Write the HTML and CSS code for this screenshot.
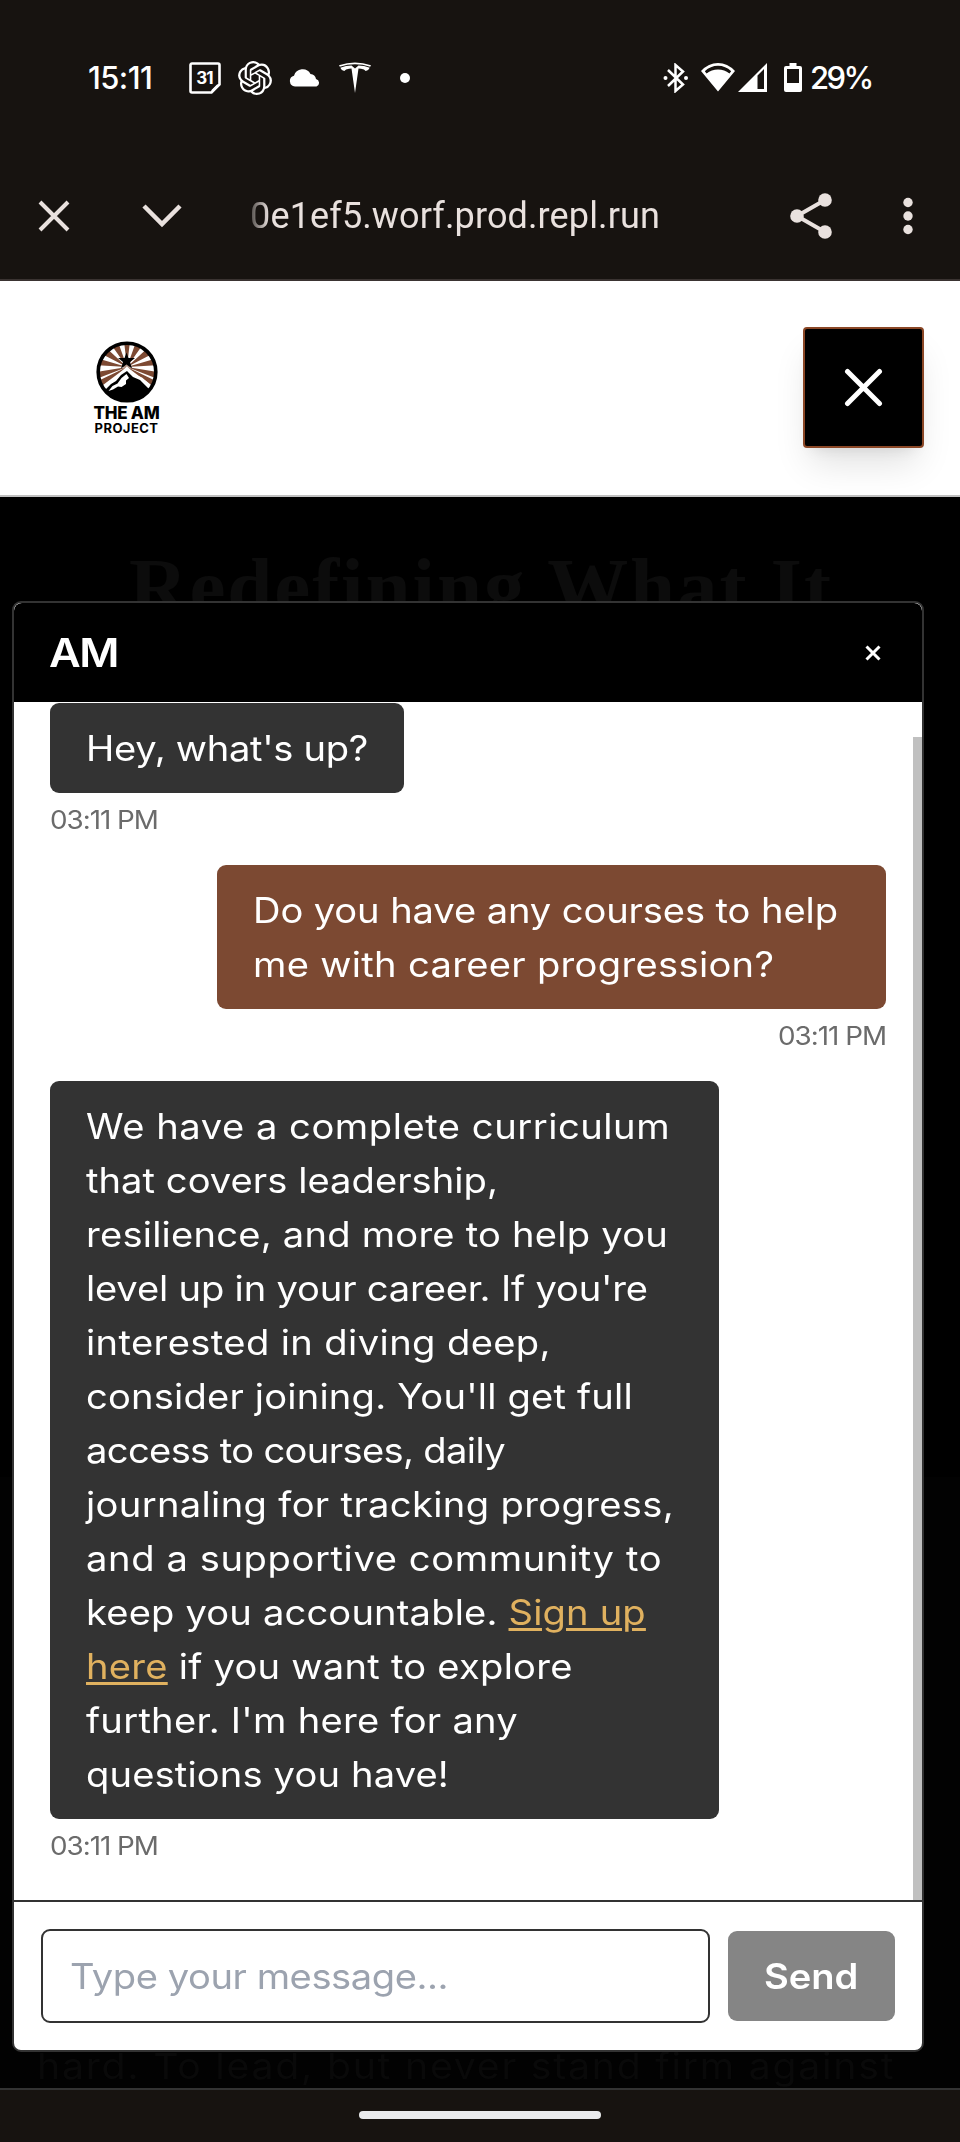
FILE: index.html
```html
<!DOCTYPE html>
<html lang="en">
<head>
<meta charset="utf-8">
<title>The AM Project</title>
<link rel="stylesheet" href="styles.css">
</head>
<body>
<div class="phone">
  <div class="status">
    <div class="status-left">
      <span class="clock">15:11</span>
      <svg class="ic-cal" width="32" height="32" viewBox="0 0 32 32"><path d="M3 1.500h26a1.500 1.500 0 0 1 1.500 1.500v19.500l-8 8H3A1.500 1.500 0 0 1 1.500 29V3A1.500 1.500 0 0 1 3 1.500z" fill="none" stroke="#fff" stroke-width="2.600"/><path d="M22.500 31v-3l5.500-5.500h3z" fill="#fff"/><text x="15.500" y="22" text-anchor="middle" class="cal-num">31</text></svg>
      <svg class="ic-knot" width="34" height="34" viewBox="0 0 24 24"><path fill="#fff" d="M22.2819 9.8211a5.9847 5.9847 0 0 0-.5157-4.9108 6.0462 6.0462 0 0 0-6.5098-2.9A6.0651 6.0651 0 0 0 4.9807 4.1818a5.9847 5.9847 0 0 0-3.9977 2.9 6.0462 6.0462 0 0 0 .7427 7.0966 5.98 5.98 0 0 0 .511 4.9107 6.051 6.051 0 0 0 6.5146 2.9001A5.9847 5.9847 0 0 0 13.2599 24a6.0557 6.0557 0 0 0 5.7718-4.2058 5.9894 5.9894 0 0 0 3.9977-2.9001 6.0557 6.0557 0 0 0-.7475-7.0729zm-9.022 12.6081a4.4755 4.4755 0 0 1-2.8764-1.0408l.1419-.0804 4.7783-2.7582a.7948.7948 0 0 0 .3927-.6813v-6.7369l2.02 1.1686a.071.071 0 0 1 .038.052v5.5826a4.504 4.504 0 0 1-4.4945 4.4944zm-9.6607-4.1254a4.4708 4.4708 0 0 1-.5346-3.0137l.142.0852 4.783 2.7582a.7712.7712 0 0 0 .7806 0l5.8428-3.3685v2.3324a.0804.0804 0 0 1-.0332.0615L9.74 19.9502a4.4992 4.4992 0 0 1-6.1408-1.6464zM2.3408 7.8956a4.485 4.485 0 0 1 2.3655-1.9728V11.6a.7664.7664 0 0 0 .3879.6765l5.8144 3.3543-2.0201 1.1685a.0757.0757 0 0 1-.071 0l-4.8303-2.7865A4.504 4.504 0 0 1 2.3408 7.872zm16.5963 3.8558L13.1038 8.364 15.1192 7.2a.0757.0757 0 0 1 .071 0l4.8303 2.7913a4.4944 4.4944 0 0 1-.6765 8.1042v-5.6772a.79.79 0 0 0-.407-.667zm2.0107-3.0231l-.142-.0852-4.7735-2.7818a.7759.7759 0 0 0-.7854 0L9.409 9.2297V6.8974a.0662.0662 0 0 1 .0284-.0615l4.8303-2.7866a4.4992 4.4992 0 0 1 6.6802 4.66zM8.3065 12.863l-2.02-1.1638a.0804.0804 0 0 1-.038-.0567V6.0742a4.4992 4.4992 0 0 1 7.3757-3.4537l-.142.0805L8.704 5.459a.7948.7948 0 0 0-.3927.6813zm1.0976-2.3654l2.602-1.4998 2.6069 1.4998v2.9994l-2.5974 1.4997-2.6067-1.4997Z"/></svg>
      <svg class="ic-cloud" width="32" height="18" viewBox="0 0 32 18"><path fill="#fff" d="M6 17.500a5.500 5.500 0 0 1-1-10.800 9 9 0 0 1 16.500-1.800 6 6 0 0 1 5.500 5 4 4 0 0 1 .5 7.600z"/></svg>
      <svg class="ic-tesla" width="32" height="31" viewBox="0 0 32 31"><path fill="#fff" d="M0 3.200Q16-2.400 32 3.200L31.200 4.700Q16-.2.8 4.700zM1.300 5.700Q7 3.700 12.500 3.600L16 6.400l3.500-2.800q5.500.1 11.200 2.100-1.200 3-4 3.300-1.200-2-4.700-2.300l-2.500-.1L16 31 12.500 6.600l-2.500.1Q6.500 7 5.300 9 2.500 8.700 1.300 5.700z"/></svg>
      <span class="more-dot"></span>
    </div>
    <div class="status-right">
      <svg class="ic-bt" width="26" height="30" viewBox="0 0 26 30"><path d="M5 7l15 14.500-7.500 6.500V2L20 8.500 5 23" fill="none" stroke="#fff" stroke-width="2.500"/><circle cx="2.500" cy="15" r="2" fill="#fff"/><circle cx="23" cy="15" r="2" fill="#fff"/></svg>
      <svg class="ic-wifi" width="34" height="29" viewBox="0 0 34 29"><path fill="#fff" fill-rule="evenodd" d="M17 0q9.500 0 17 8L17 28.500 0 8Q7.500 0 17 0zM17 2.800Q9.500 2.800 3.800 8.300l1.800 2.200Q10.500 6.500 17 6.500t11.400 4l1.800-2.200Q24.500 2.800 17 2.800z"/></svg>
      <svg class="ic-sig" width="29" height="29" viewBox="0 0 29 29"><path fill="#fff" fill-rule="evenodd" d="M29 0v29H0zM19.500 12.500V26H26V6z"/></svg>
      <svg class="ic-bat" width="18" height="29" viewBox="0 0 18 29"><path fill="#fff" fill-rule="evenodd" d="M5.500 0h7v3H16a2 2 0 0 1 2 2v22a2 2 0 0 1-2 2H2a2 2 0 0 1-2-2V5a2 2 0 0 1 2-2h3.500zM3 6v14h12V6z"/></svg>
      <span class="pct">29%</span>
    </div>
  </div>

  <div class="toolbar">
    <svg class="tb-x" width="32" height="32" viewBox="0 0 32 32"><path d="M2 2l28 28M30 2L2 30" stroke="#e9e1de" stroke-width="4" fill="none"/></svg>
    <svg class="tb-down" width="40" height="24" viewBox="0 0 40 24"><path d="M2 2l18 18L38 2" stroke="#e9e1de" stroke-width="4.500" fill="none"/></svg>
    <div class="url"><span>0e1ef5.worf.prod.repl.run</span></div>
    <svg class="tb-share" width="42" height="46" viewBox="0 0 42 46"><path d="M35 7L7 23l28 16" stroke="#e9e1de" stroke-width="4" fill="none"/><g fill="#e9e1de"><circle cx="35" cy="7" r="6.800"/><circle cx="7" cy="23" r="6.800"/><circle cx="35" cy="39" r="6.800"/></g></svg>
    <svg class="tb-more" width="10" height="38" viewBox="0 0 10 38"><g fill="#e9e1de"><circle cx="5" cy="5.500" r="4.700"/><circle cx="5" cy="19" r="4.700"/><circle cx="5" cy="32.500" r="4.700"/></g></svg>
  </div>

  <header class="site">
    <div class="logo">
      <svg width="62" height="62" viewBox="0 0 62 62">
        <defs><clipPath id="disc"><circle cx="31" cy="31" r="28.500"/></clipPath></defs>
        <circle cx="31" cy="31" r="29.500" fill="#fff"/>
        <g clip-path="url(#disc)">
          <path fill="#7d4a33" d="M31 26L28 0h6zM31 26L14 2l7-4zM31 26L41-2l7 4zM31 26L2 11l5-7zM31 26L55 4l5 7zM31 26L0 24v-7zM31 26l31-9v7zM31 26L0 38v-7zM31 26l31 5v7zM31 26L3 47l-3-6zM31 26l31 15-3 6z"/>
          <path fill="#fff" d="M31 25.500l8 8 7 3 12 10v6H2l9-11 8-5z"/>
          <path fill="#000" d="M0 56l9-7 6-6 5-3 5-6 6-4 6 6 7 3 9 9 9 6v10H0z"/>
          <path fill="#fff" d="M12.500 50l4-5 5-2.500 4-5.500 5-4 2.500 4-3 2.500v3.500l-4.500 3-3.500-.5-5 3z"/>
        </g>
        <path fill="#000" d="M30.500 11.500l2 5.500h6.500l-5 4 2 6.500-5.500-4-5.500 4 2-6.500-5-4h6.500z"/>
        <circle cx="31" cy="31" r="28.800" fill="none" stroke="#000" stroke-width="3.600"/>
      </svg>
      <span class="logo-a">THE AM</span>
      <span class="logo-b">PROJECT</span>
    </div>
    <button class="menu-btn"><svg width="39" height="39" viewBox="0 0 39 39"><path d="M3.500 3.500l32 32M35.500 3.500l-32 32" stroke="#fff" stroke-width="5" stroke-linecap="round"/></svg></button>
  </header>

  <main class="page">
    <h1 class="hero">Redefining What It</h1>
    <p class="blurb"><span class="w">hard. To lead, but never stand firm against</span></p>

    <section class="chat">
      <div class="chat-head"><span class="chat-title w">AM</span><svg width="16" height="16" viewBox="0 0 16 16"><path d="M1.500 1.500l13 13M14.500 1.500l-13 13" stroke="#fff" stroke-width="3"/></svg></div>
      <div class="chat-body">
        <div class="msgs">
          <div class="msg">
            <div class="bubble"><span class="ln greet">Hey, what's up?</span></div>
            <time><span class="w">03:11 PM</span></time>
          </div>
          <div class="msg me">
            <div class="bubble wide"><span class="ln">Do you have any courses to help</span><span class="ln">me with career progression?</span></div>
            <time><span class="w">03:11 PM</span></time>
          </div>
          <div class="msg reply">
            <div class="bubble wide"><span class="ln">We have a complete curriculum</span><span class="ln">that covers leadership,</span><span class="ln">resilience, and more to help you</span><span class="ln">level up in your career. If you're</span><span class="ln">interested in diving deep,</span><span class="ln">consider joining. You'll get full</span><span class="ln">access to courses, daily</span><span class="ln">journaling for tracking progress,</span><span class="ln">and a supportive community to</span><span class="ln">keep you accountable. <a href="#">Sign up</a></span><span class="ln"><a href="#">here</a> if you want to explore</span><span class="ln">further. I'm here for any</span><span class="ln">questions you have!</span></div>
            <time><span class="w">03:11 PM</span></time>
          </div>
        </div>
        <div class="thumb"></div>
      </div>
      <div class="composer">
        <div class="field"><span class="w">Type your message...</span></div>
        <button class="send"><span class="w">Send</span></button>
      </div>
    </section>
  </main>
  <footer class="nav"><span class="pill"></span></footer>
</div>
</body>
</html>
```
FILE: styles.css
```css
* { box-sizing: border-box; }
body { margin: 0; background: #171310; font-family: Inter, "Open Sans", sans-serif; }
svg { display: block; flex: none; }
button { font: inherit; margin: 0; padding: 0; }
.phone { width: 960px; height: 2142px; display: flex; flex-direction: column; overflow: hidden; }

/* Android status bar */
.status { height: 155px; flex: none; display: flex; justify-content: space-between; color: #fff; padding: 0 89px 0 88px; }
.status-left, .status-right { display: flex; align-items: center; height: 155px; }
.clock, .pct { font-size: 31px; font-weight: 500; line-height: 40px; white-space: nowrap; }
.clock { width: 62px; letter-spacing: -.6px; }
.pct { width: 61px; margin-left: 8px; letter-spacing: -2.6px; }
.ic-cal { margin-left: 39px; }
.cal-num { font: 700 17px Inter, sans-serif; fill: #fff; letter-spacing: -1px; }
.ic-knot { margin-left: 17px; }
.ic-cloud { margin-left: 17px; }
.ic-tesla { margin-left: 18px; }
.more-dot { width: 10px; height: 10px; border-radius: 50%; background: #fff; margin-left: 29px; }
.ic-wifi { margin-left: 12px; }
.ic-sig { margin-left: 3px; }
.ic-bat { margin-left: 17px; }

/* Browser toolbar */
.toolbar { height: 126px; flex: none; display: flex; align-items: center; padding: 0 47px 2px 38px; border-bottom: 2px solid #3a3331; }
.tb-down { margin-left: 72px; }
.url { width: 417px; margin-left: 61px; display: flex; justify-content: flex-end; color: #e9e1de; font: 400 36px/48px Roboto, sans-serif; letter-spacing: .13px; white-space: nowrap; -webkit-mask-image: linear-gradient(90deg, transparent, #000 26px); mask-image: linear-gradient(90deg, transparent, #000 26px); }
.tb-share { margin-left: 130px; }
.tb-more { margin-left: 71px; }

/* Site header */
.site { height: 216px; flex: none; background: #fff; border-bottom: 2px solid #c0c0c0; display: flex; justify-content: space-between; align-items: flex-start; padding: 46px 36px 0 93px; }
.logo { display: flex; flex-direction: column; align-items: center; padding-top: 14px; width: 67px; color: #000; }
.logo-a { font-size: 17px; font-weight: 800; line-height: 17px; margin-top: 2px; letter-spacing: -.24px; white-space: nowrap; }
.logo-b { font-size: 13px; font-weight: 700; line-height: 12px; letter-spacing: .46px; white-space: nowrap; }
.menu-btn { width: 121px; height: 121px; background: #000; border: 2px solid #8b4726; border-radius: 4px; display: flex; align-items: center; justify-content: center; box-shadow: 0 22px 34px -7px rgba(0,0,0,.12), 0 9px 14px -9px rgba(0,0,0,.1); }

/* Dimmed page */
.page { height: 1591px; flex: none; position: relative; overflow: hidden; background: linear-gradient(#000 980px, #020202 980px); display: flex; flex-direction: column; justify-content: space-between; }
.hero { margin: 45px 0 0 129px; font: 700 81px/90px "Liberation Serif", serif; letter-spacing: 1.94px; color: #0c0c0c; white-space: nowrap; }
.blurb { margin: 0 0 0 37px; font-size: 36px; line-height: 44px; letter-spacing: 1.6px; color: #090909; white-space: nowrap; }

/* Chat window */
.chat { position: absolute; left: 12px; top: 104px; width: 912px; height: 1451px; border: 2px solid #333; border-radius: 9px; background: #fff; overflow: hidden; display: flex; flex-direction: column; }
.chat-head { height: 99px; flex: none; background: #000; border-radius: 8px 8px 0 0; display: flex; align-items: center; justify-content: space-between; padding: 0 41px 0 35px; color: #fff; }
.chat-title { font-size: 40px; font-weight: 600; line-height: 54px; letter-spacing: -1.35px; }
.chat-body { flex: 1; display: flex; justify-content: space-between; overflow: hidden; }
.msgs { width: 872px; padding: 1px 0 0 36px; display: flex; flex-direction: column; gap: 9px; }
.thumb { width: 9px; background: #c0c0c0; margin-top: 35px; }
.msg { display: flex; flex-direction: column; align-items: flex-start; }
.me { align-items: flex-end; }
.bubble { background: #333; color: #fff; border-radius: 9px; padding: 18px 36px; width: 354px; font-size: 35px; line-height: 54px; white-space: nowrap; }
.wide { width: 669px; }
.me .bubble { background: #7c4932; }

/* Wide letterforms */
.w { display: inline-block; transform: scaleX(1.09); transform-origin: left; }
.ln { display: block; transform: scaleX(1.09); transform-origin: left; }
.me .w { transform-origin: right; }
.send .w { transform-origin: center; }
.greet { letter-spacing: -.29px; }
.me .ln:nth-child(1) { letter-spacing: -.11px; }
.me .ln:nth-child(2) { letter-spacing: .27px; }
.reply .ln:nth-child(1) { letter-spacing: .48px; }
.reply .ln:nth-child(2) { letter-spacing: .03px; }
.reply .ln:nth-child(3) { letter-spacing: .19px; }
.reply .ln:nth-child(4) { letter-spacing: -.17px; }
.reply .ln:nth-child(5) { letter-spacing: .34px; }
.reply .ln:nth-child(6) { letter-spacing: .16px; }
.reply .ln:nth-child(7) { letter-spacing: -.6px; }
.reply .ln:nth-child(8) { letter-spacing: .3px; }
.reply .ln:nth-child(9) { letter-spacing: .54px; }
.reply .ln:nth-child(10) { letter-spacing: .14px; }
.reply .ln:nth-child(11) { letter-spacing: .22px; }
.reply .ln:nth-child(12) { letter-spacing: .23px; }
.reply .ln:nth-child(13) { letter-spacing: .12px; }
.ln a { color: #e0b15f; text-decoration: underline; text-decoration-thickness: 3px; text-underline-offset: 3px; }
time { font-size: 25.500px; line-height: 36px; letter-spacing: -.92px; margin-top: 9px; padding-bottom: 9px; height: 54px; color: #6b6b6b; white-space: nowrap; }

.composer { height: 150px; flex: none; border-top: 2px solid #333; padding: 27px; display: flex; justify-content: space-between; align-items: center; }
.field { width: 669px; height: 94px; border: 2px solid #333; border-radius: 9px; padding: 0 27px; font-size: 35px; line-height: 90px; letter-spacing: -.42px; color: #9ca3af; white-space: nowrap; }
.send { width: 167px; height: 90px; border: 0; border-radius: 9px; background: #858585; color: #fff; font-size: 35px; font-weight: 600; letter-spacing: -.12px; }

.nav { height: 54px; flex: none; background: #171310; border-top: 2px solid #333; padding-top: 21px; display: flex; justify-content: center; }
.pill { width: 242px; height: 8px; border-radius: 4px; background: #e9eaec; }
```
